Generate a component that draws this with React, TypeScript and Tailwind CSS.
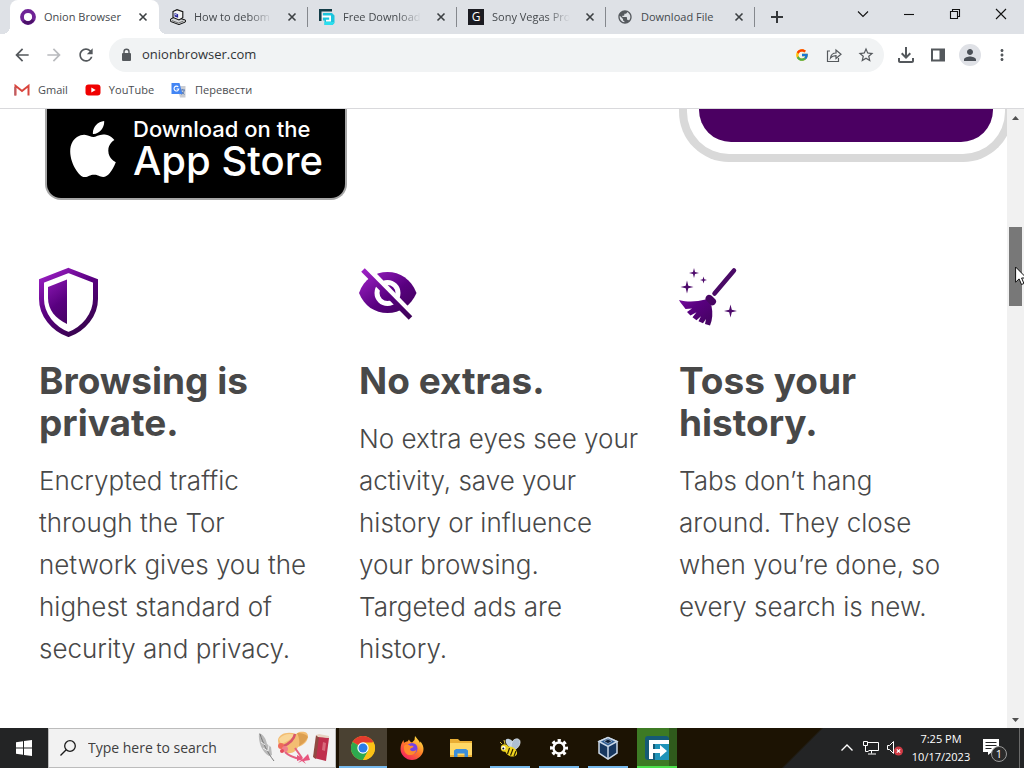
import type { ReactNode } from "react";
import { FcGoogle } from "react-icons/fc";
import { SiApple } from "react-icons/si";
import {
    MdArrowBack,
    MdArrowForward,
    MdMoreVert,
    MdOutlineFileDownload,
    MdPerson,
    MdPublic,
    MdRefresh,
    MdStarBorder,
} from "react-icons/md";

const CloseGlyph = () => (
    <svg className="size-4" viewBox="0 0 16 16" stroke="#3c4043" strokeWidth="1.6">
        <path d="M4.5 4.5l7 7M11.5 4.5l-7 7" />
    </svg>
);

const OnionIcon = () => (
    <svg className="size-4 shrink-0" viewBox="0 0 16 16">
        <circle cx="8" cy="8" r="6" fill="#fff" stroke="#6f2396" strokeWidth="3.8" />
        <path d="M3.6 12A6 6 0 0 0 13 11" fill="none" stroke="#4a1168" strokeWidth="3.2" />
    </svg>
);

const ComputerIcon = () => (
    <svg className="size-4 shrink-0" viewBox="0 0 16 16">
        <path d="M.6 10L5 8l10.400 3v2L9 15.600.6 12.500z" fill="#d4d6d8" stroke="#111" />
        <path d="M3 2.500L7 .7l5.800 2v6L9 11 3 8.500z" fill="#f2f2f2" stroke="#111" strokeWidth="1.100" />
        <path d="M4.500 3.900l3.600 1.400v3.500L4.500 7.500z" fill="#24249c" />
        <path d="M5.200 5l1.500.6v1l-1.500-.6z" fill="#fff" />
        <path d="M2 11.600l6.500 2.400 5-2" fill="none" stroke="#555" strokeWidth="0.800" />
    </svg>
);

const FreeDownloadIcon = () => (
    <svg className="size-4 shrink-0" viewBox="0 0 16 16">
        <path d="M0 0h13v2.500H2.500V12H0z" fill="#123c47" />
        <path d="M4 4h9l2.500 2.500V14l-2 2H5.500v-4.500H4z" fill="#1cc4dc" />
        <path d="M3 6.500h9v6H7v-1.800h3.200V8.400H3z" fill="#fff" />
        <path d="M5.500 13H15v1l-1.500 2h-8z" fill="#2adfee" />
    </svg>
);

const GIcon = () => (
    <span className="flex size-4 shrink-0 items-center justify-center bg-[#1b1b21] text-xs text-white">G</span>
);

const tabs: { title: string; icon: ReactNode; active?: boolean; faded?: boolean }[] = [
    { title: "Onion Browser", icon: <OnionIcon />, active: true },
    { title: "How to debom", icon: <ComputerIcon />, faded: true },
    { title: "Free Download", icon: <FreeDownloadIcon />, faded: true },
    { title: "Sony Vegas Pro", icon: <GIcon />, faded: true },
    { title: "Download File", icon: <MdPublic className="size-4 shrink-0 text-[#55595e]" /> },
];

const TabStrip = () => (
    <header className="flex h-[34px] shrink-0 bg-[#dee1e6] pl-2.5">
        <div className="flex min-w-0 flex-1">
            {tabs.map((tab) => (
                <div
                    key={tab.title}
                    className={
                        tab.active
                            ? "relative flex w-[149px] min-w-0 items-center rounded-t-lg bg-white pr-2 pl-2.5 before:absolute before:bottom-0 before:-left-2 before:size-2 before:bg-[radial-gradient(circle_at_0_0,transparent_8px,white_8px)] after:absolute after:-right-2 after:bottom-0 after:size-2 after:bg-[radial-gradient(circle_at_100%_0,transparent_8px,white_8px)]"
                            : "relative flex w-[149px] min-w-0 items-center pr-2 pl-[11px] after:absolute after:right-0 after:h-5 after:w-px after:bg-[#85888d]"
                    }
                >
                    {tab.icon}
                    <a
                        href="#"
                        className={
                            tab.faded
                                ? "ml-2 min-w-0 flex-1 whitespace-nowrap text-[11px] text-[#45494d] [mask-image:linear-gradient(90deg,#000_70%,transparent)]"
                                : "ml-2 min-w-0 flex-1 whitespace-nowrap text-[11px] text-[#45494d]"
                        }
                    >
                        {tab.title}
                    </a>
                    <button aria-label="Close tab" className="ml-3">
                        <CloseGlyph />
                    </button>
                </div>
            ))}
            <button aria-label="New tab" className="ml-3.5">
                <svg className="size-4" viewBox="0 0 16 16" stroke="#34373a" strokeWidth="2">
                    <path d="M8 2v12M2 8h12" />
                </svg>
            </button>
        </div>
        <div className="flex h-7 shrink-0">
            <WindowButton label="Search tabs">
                <path d="M3 5.5l5 5 5-5" />
            </WindowButton>
            <WindowButton label="Minimize">
                <path d="M3 8.5h10" />
            </WindowButton>
            <WindowButton label="Restore">
                <path d="M3.5 5.5h7v7h-7zM5.5 5.5v-2h7v7h-2" />
            </WindowButton>
            <WindowButton label="Close">
                <path d="M3 3l10 10M13 3L3 13" />
            </WindowButton>
        </div>
    </header>
);

const WindowButton = ({ label, children }: { label: string; children: ReactNode }) => (
    <button aria-label={label} className="flex w-[46px] items-center justify-center">
        <svg className="size-4" viewBox="0 0 16 16" fill="none" stroke="#111" strokeWidth="1.1">
            {children}
        </svg>
    </button>
);

const ToolButton = ({ label, children }: { label: string; children: ReactNode }) => (
    <button aria-label={label} className="flex h-8 w-8 shrink-0 items-center justify-center text-[#54585c]">
        {children}
    </button>
);

const Toolbar = () => (
    <div className="flex h-[42px] shrink-0 items-center bg-white px-1.5">
        <ToolButton label="Back"><MdArrowBack className="size-5" /></ToolButton>
        <ToolButton label="Forward"><MdArrowForward className="size-5 text-[#b9bbbe]" /></ToolButton>
        <ToolButton label="Reload"><MdRefresh className="size-5" /></ToolButton>
        <div className="mr-1.5 ml-[7px] flex h-[34px] min-w-0 flex-1 items-center rounded-full bg-[#f1f3f4] pr-0.5 pl-[9px]">
            <svg className="size-4 shrink-0" viewBox="0 0 16 16">
                <rect x="4" y="6" width="9" height="8" rx="1" fill="#54585c" />
                <path d="M6 6.500V4.700a2.500 2.500 0 0 1 5 0v1.800" fill="none" stroke="#54585c" strokeWidth="1.400" />
            </svg>
            <input
                aria-label="Address"
                defaultValue="onionbrowser.com"
                className="ml-2 min-w-0 flex-1 bg-transparent text-[13px] text-[#303336] outline-none"
            />
            <ToolButton label="Search with Google"><FcGoogle className="size-3.5" /></ToolButton>
            <ToolButton label="Share">
                <svg className="size-4" viewBox="0 0 16 16" fill="none" stroke="currentColor" strokeWidth="1.2">
                    <path d="M4 4H1.500v10.500h11V11M4.500 11C5 7.600 7 6 10 6V3l5 4.300-5 4.200V8.700c-2.500 0-4.200.6-5.500 2.300z" />
                </svg>
            </ToolButton>
            <ToolButton label="Bookmark"><MdStarBorder className="size-[18px]" /></ToolButton>
        </div>
        <ToolButton label="Downloads"><MdOutlineFileDownload className="size-6" /></ToolButton>
        <ToolButton label="Side panel">
            <svg className="size-4" viewBox="0 0 16 16">
                <path d="M2 2.500h12v11H2z" fill="none" stroke="currentColor" strokeWidth="2" />
                <path d="M9.500 2.500H14v11H9.500z" fill="currentColor" />
            </svg>
        </ToolButton>
        <ToolButton label="Profile">
            <span className="flex size-[22px] items-center justify-center rounded-full bg-[#dfe1e6]">
                <MdPerson className="size-[18px] text-[#4b5057]" />
            </span>
        </ToolButton>
        <ToolButton label="Menu"><MdMoreVert className="size-[18px]" /></ToolButton>
    </div>
);

const Bookmarks = () => (
    <nav className="flex h-8 shrink-0 items-center gap-[17px] bg-white pb-1 pl-[14px] text-[11px] text-[#4a4d51]">
        <a href="#" className="flex items-center gap-2">
            <svg className="size-4" viewBox="0 0 16 16" fill="none">
                <path d="M1.500 13.500V3.800L8 9l6.500-5.200v9.700" stroke="#d9453d" strokeWidth="2" />
                <path d="M1 13.500V5" stroke="#b8646c" strokeWidth="1.500" />
            </svg>
            Gmail
        </a>
        <a href="#" className="flex items-center gap-2">
            <svg className="size-4" viewBox="0 0 16 16">
                <rect x="0.500" y="2.500" width="15" height="11" rx="3" fill="#f00000" />
                <path d="M6.300 5.500v5L10.700 8z" fill="#fff" />
            </svg>
            YouTube
        </a>
        <a href="#" className="flex items-center gap-2">
            <svg className="size-4" viewBox="0 0 16 16">
                <path d="M6 4h8.500v11.500H9z" fill="#c9ccd2" />
                <path d="M.5 1h8l3 11H.5z" fill="#4285f4" />
                <path d="M7.300 5A2.400 2.400 0 1 0 7.800 7H5.500" fill="none" stroke="#fff" strokeWidth="1.100" />
                <path d="M9.500 8h4.500M11.700 7v1M10.500 12.500c2-1.500 2.500-3 2.700-4.500M10.800 9.800l2.500 2.700" stroke="#5e7fb5" fill="none" />
            </svg>
            Перевести
        </a>
    </nav>
);

const PurpleGradient = ({ id }: { id: string }) => (
    <linearGradient id={id} x1="5" y1="5" x2="45" y2="60" gradientUnits="userSpaceOnUse">
        <stop offset="0" stopColor="#9a1fc2" />
        <stop offset="0.5" stopColor="#590080" />
        <stop offset="1" stopColor="#3a0352" />
    </linearGradient>
);

const ShieldIcon = () => (
    <svg className="h-[70px] w-[60px]" viewBox="0 0 60 70">
        <PurpleGradient id="shield" />
        <path
            d="M29.500 3.500L56.500 14v18c0 16-12 30-27 35.500C14.500 62 2.500 48 2.500 32V14z"
            fill="none"
            stroke="url(#shield)"
            strokeWidth="5"
        />
        <path d="M28 12.500V57C16.500 51.500 9 43 9 31V20z" fill="url(#shield)" />
    </svg>
);

const EyeIcon = () => (
    <svg className="h-[70px] w-[60px]" viewBox="0 0 60 70">
        <PurpleGradient id="eye" />
        <path d="M0 26C5 12 16 5 28.500 5S52 12 57.500 26C52 39 41 46 28.500 46S5 39 0 26z" fill="url(#eye)" />
        <circle cx="28.500" cy="26" r="10.500" fill="none" stroke="#fff" strokeWidth="5" />
        <path d="M6.500 0l48 50" stroke="#fff" strokeWidth="7" />
        <path d="M4 3l47.500 48" stroke="url(#eye)" strokeWidth="5" />
    </svg>
);

const BroomIcon = () => (
    <svg className="h-[70px] w-[60px]" viewBox="0 0 60 70">
        <PurpleGradient id="broom" />
        <path d="M55 3.500L35.500 26.500" stroke="#4a0a66" strokeWidth="4.500" strokeLinecap="round" />
        <path d="M28 28.500c2-1.500 4-.5 6 1.500s4 3.500 3 5.500-2.500 3.500-5 3-5-3.500-5.500-5 .2-4 1.500-5z" fill="#480563" />
        <path
            d="M0 33c10 2.500 18 1.500 26.500-.5l6 6.500c1.500 7 1 14-1.500 19.500l-5-1.500 1-5-3 4.300-4.500-2 2.500-5-4.500 4-4-3 4-5-6 3.200-3.500-3.500 5-3.500-6.500.5C4 38.500 1.500 36 0 33z"
            fill="url(#broom)"
        />
        <g fill="#4d0a6b">
            <path d="M15 1l1 4 4 1-4 1-1 4-1-4-4-1 4-1z" />
            <path d="M24.500 9.500l.8 2.700 2.700.8-2.700.8-.8 2.700-.8-2.700-2.700-.8 2.700-.8z" />
            <path d="M8 13.500l1.300 5.200 5.200 1.300-5.200 1.300L8 26.500l-1.300-5.200L1.500 20l5.200-1.300z" />
            <path d="M51.500 37.500l1.300 5.200L58 44l-5.200 1.300-1.300 5.200-1.300-5.200L45 44l5.200-1.300z" />
        </g>
    </svg>
);

const features = [
    {
        icon: <ShieldIcon />,
        title: "Browsing is private.",
        text: "Encrypted traffic through the Tor network gives you the highest standard of security and privacy.",
    },
    {
        icon: <EyeIcon />,
        title: "No extras.",
        text: "No extra eyes see your activity, save your history or influence your browsing. Targeted ads are history.",
    },
    {
        icon: <BroomIcon />,
        title: "Toss your history.",
        text: "Tabs don’t hang around. They close when you’re done, so every search is new.",
    },
];

const SitePage = () => (
    <main className="min-w-0 flex-1 overflow-hidden bg-white pr-2 pl-[39px] font-[Inter,sans-serif]">
        <div className="grid grid-cols-3 items-start">
            <a
                href="#"
                className="ml-1.5 flex h-[91px] w-[302px] gap-3 rounded-b-[16px] border-2 border-t-0 border-[#a6a6a6] bg-black pl-[18px] text-white"
            >
                <SiApple className="mt-3 size-14 shrink-0" />
                <span className="pt-2 whitespace-nowrap">
                    <span className="block text-[22px] leading-6 font-medium">Download on the</span>
                    <span className="block text-[40px] leading-10 font-medium">App Store</span>
                </span>
            </a>
            <div className="col-start-3 h-[53px] w-[334px] rounded-b-[50px] border-8 border-t-0 border-[#d9d9d9] px-3 pb-3">
                <div className="h-full rounded-b-[32px] bg-[#4b0062]" />
            </div>
        </div>
        <div className="mt-[67px] grid grid-cols-3">
            {features.map((feature) => (
                <section key={feature.title} className="pr-8">
                    {feature.icon}
                    <h2 className="mt-[23px] text-[37px] leading-[42px] font-bold text-[#484848]">{feature.title}</h2>
                    <p className="mt-4 text-[26px] leading-[42px] font-light text-[#484848]">{feature.text}</p>
                </section>
            ))}
        </div>
    </main>
);

const Scrollbar = () => (
    <div className="relative flex w-[17px] shrink-0 flex-col items-center bg-[#f1f1f1]">
        <button aria-label="Scroll up" className="flex h-[17px] items-center">
            <svg className="h-1 w-[7px]" viewBox="0 0 7 4"><path d="M0 4l3.500-4L7 4z" fill="#505050" /></svg>
        </button>
        <div className="grow-[101]" />
        <div className="relative w-[13px] grow-[79] bg-[#787878]">
            <svg className="absolute top-[39px] left-1.5 h-5 w-3" viewBox="0 0 12 20">
                <path d="M.6 1v15.200l3.500-3.300 2.400 5.600 2.400-1-2.300-5.500H11.500z" fill="#fff" stroke="#111" />
            </svg>
        </div>
        <div className="grow-[405]" />
        <button aria-label="Scroll down" className="flex h-[17px] items-center">
            <svg className="h-1 w-[7px]" viewBox="0 0 7 4"><path d="M0 0l3.500 4L7 0z" fill="#505050" /></svg>
        </button>
    </div>
);

const ChromeIcon = () => (
    <svg className="size-6" viewBox="0 0 24 24">
        <circle cx="12" cy="12" r="12" fill="#fbc116" />
        <path d="M12 12L1.600 6A12 12 0 0 1 22.400 6z" fill="#e33b2e" />
        <path d="M1.600 6A12 12 0 0 0 12 24l5.200-9L12 12z" fill="#2da94f" />
        <path d="M12 6.500h10.700A12 12 0 0 1 12 24l5-9z" fill="#fbc116" />
        <circle cx="12" cy="12" r="5.700" fill="#fff" />
        <circle cx="12" cy="12" r="4.500" fill="#2b7de9" />
    </svg>
);

const FirefoxIcon = () => (
    <svg className="size-6" viewBox="0 0 24 24">
        <linearGradient id="fox" x1="20" y1="2" x2="5" y2="22" gradientUnits="userSpaceOnUse">
            <stop offset="0" stopColor="#ffe042" />
            <stop offset="0.5" stopColor="#ff7b28" />
            <stop offset="1" stopColor="#f5245e" />
        </linearGradient>
        <path
            d="M15 0c2 2 2.500 3.500 4 5l1 2 .5-1.500c2 2.500 3 5 3 7.500C23.500 19 18 24 12 24S.5 19 .5 13C.5 9.500 1.500 7 3.500 4l.5 3C5 6 6 5.500 7.500 5.500L9 3.500c.5 1.500 1.500 2.500 3 3L14.500 4z"
            fill="url(#fox)"
        />
        <circle cx="12" cy="12.500" r="5.500" fill="#7542e5" />
        <path d="M4 10c2-2 5-1 6.500 0 1.500-.5 3 0 3 1-1 1-3 1-3.500 2.500 1 2.500 5 2 6.500 0-.5 4-4 6-7.500 5.500S3.500 15 4 10z" fill="#ff8a2c" />
    </svg>
);

const FolderIcon = () => (
    <svg className="size-6" viewBox="0 0 24 24">
        <path d="M1 3h8l2 2h12v16H1z" fill="#e9ae35" />
        <path d="M1 7h22v12H1z" fill="#ffd866" />
        <path d="M5 21v-6.500L7 13h10l2 1.500V21h-3.500v-3.500h-7V21z" fill="#3c8edb" />
    </svg>
);

const BeeIcon = () => (
    <svg className="size-6" viewBox="0 0 24 24">
        <path d="M11 11C6 6 7 2 11 3s5 4 4 8z" fill="#c3d3e2" />
        <path d="M13 11c0-5 3-9 7-8s2 9-4 11z" fill="#aebfd2" stroke="#e2e9f0" strokeWidth="0.700" />
        <ellipse cx="13" cy="15.500" rx="6.500" ry="4.500" transform="rotate(30 13 15.500)" fill="#f2d51e" />
        <path d="M11.500 12l-2 6M15 13l-2.500 6.500M18 15l-2 5" stroke="#2c2305" strokeWidth="1.200" />
        <circle cx="6.500" cy="12" r="3.700" fill="#ecd224" />
        <circle cx="5.500" cy="12" r="2.100" fill="#fff" />
        <circle cx="5.300" cy="12.500" r="1" fill="#111" />
        <path d="M4 8L2 6M7 8L6 4" stroke="#d9c33b" />
    </svg>
);

const GearIcon = () => (
    <svg className="size-5" viewBox="0 0 20 20" fill="none" stroke="#fff">
        <circle cx="10" cy="10" r="5.500" strokeWidth="2.400" />
        <circle cx="10" cy="10" r="7.500" strokeWidth="3" strokeDasharray="3.200 2.690" strokeDashoffset="1.600" />
    </svg>
);

const BoxIcon = () => (
    <svg className="size-6" viewBox="0 0 24 24" stroke="#cbd9e8" strokeWidth="1.500">
        <path d="M3 5.500l9-4 9 4V17l-9 6-9-6z" fill="#17375f" />
        <path d="M3 5.500l9 5 9-5-9-4z" fill="#2f5d93" />
        <path d="M12 10.500V23" />
        <path d="M8 5.300l4-2 4 2-4 2.200z" fill="#0c1e38" strokeWidth="0.500" />
    </svg>
);

const FdmIcon = () => (
    <svg className="size-6" viewBox="0 0 24 24">
        <rect x="0" y="0" width="24" height="24" rx="3" fill="#155a76" />
        <path d="M10 8h14v16H10z" fill="#1f93b8" />
        <path d="M4 4h20v4H8v5h7V9l7 6-7 6v-4H8v6H4z" fill="#fff" />
    </svg>
);

const apps = [
    { name: "Chrome", icon: <ChromeIcon />, style: "w-12 bg-[#4a4132] border-[#76b9ed]" },
    { name: "Firefox", icon: <FirefoxIcon />, style: "w-12 border-transparent" },
    { name: "File Explorer", icon: <FolderIcon />, style: "w-12 border-transparent" },
    { name: "Bee", icon: <BeeIcon />, style: "mx-1 w-10 border-[#76b9ed]" },
    { name: "Settings", icon: <GearIcon />, style: "mx-1 w-10 border-[#76b9ed]" },
    { name: "VirtualBox", icon: <BoxIcon />, style: "mx-1 w-10 border-[#76b9ed]" },
    {
        name: "Free Download Manager",
        icon: <FdmIcon />,
        style: "mx-1 w-10 border-[#4be04b] bg-[linear-gradient(90deg,#3d7a24_32px,#2f5a1c_32px)]",
    },
];

const SearchArt = () => (
    <svg className="mr-1 h-9 w-[74px] shrink-0" viewBox="0 0 74 36">
        {/* feather */}
        <path d="M2 3c5 2 7 6 8 11l4 3 1 8-3 1C5 22 1 12 2 3z" fill="#b9b9b9" />
        <path d="M3 4c3 9 7 18 14 27" stroke="#777" fill="none" />
        <path d="M4 12l4 3M6 18l5 3M12 15l-1 6" stroke="#eee" />
        {/* bonnet */}
        <path d="M21 10c1-6 9-9 18-6l3-2c5-1 9 0 9 4 0 5-4 9-10 11-2 5-8 8-13 5-4-2-7-7-7-12z" fill="#f3bd72" />
        <path d="M22 9c4-5 11-6 16-4-4 4-8 7-14 9z" fill="#f9d698" />
        <path d="M40 3c5 0 9 1 11 4-2 4-5 7-9 9 1-5 0-9-2-13z" fill="#dc9f50" />
        <path d="M38 4c-1 6-6 10-13 13" stroke="#d9566a" strokeWidth="2.500" fill="none" />
        <path d="M28 22c4 4 9 6 16 7M38 18l7 10" stroke="#e4607f" strokeWidth="2" fill="none" />
        <circle cx="24" cy="16" r="3" fill="#ee6a5a" />
        <circle cx="28" cy="19" r="3" fill="#f0808c" />
        <circle cx="25" cy="21" r="2" fill="#e4485a" />
        <path d="M46 28l-6-3v6l6-2 5-5 2 6-6 1 2 3-4-3-4 2z" fill="#e8557e" />
        {/* book */}
        <path d="M60 6l12 2-3 23-12-3z" fill="#bf2f4c" />
        <path d="M59 5l3 2-3 22-3-2z" fill="#8f4a42" />
        <path d="M59 5l3-1 10 2v2l-11-1z" fill="#e6d3c2" />
        <path d="M66 12l3 1-1 8-3-1z" fill="#d86a7c" />
    </svg>
);

const Taskbar = () => (
    <footer className="flex h-10 shrink-0 bg-[#232425] text-white">
        <button aria-label="Start" className="flex w-12 shrink-0 items-center justify-center">
            <svg className="size-4" viewBox="0 0 16 16" fill="#fff">
                <path d="M0 2.200L7 1.200v6.300H0zM8 1l8-1v7.500H8zM0 8.500h7v6.300l-7-1zM8 8.500h8V16l-8-1z" />
            </svg>
        </button>
        <div className="flex w-72 min-w-0 items-center border border-[#bcbcbc] bg-[#f2f2f2] pl-[11px]">
            <svg className="size-4 shrink-0" viewBox="0 0 16 16" fill="none" stroke="#1c1c1c" strokeWidth="1.300">
                <circle cx="10" cy="6" r="5.300" />
                <path d="M6.200 9.800L.5 15.500" />
            </svg>
            <input
                aria-label="Search"
                placeholder="Type here to search"
                className="ml-3 min-w-0 flex-1 bg-transparent text-sm outline-none placeholder:text-[#404040]"
            />
            <SearchArt />
        </div>
        <div className="flex min-w-0 flex-1 gap-px bg-[linear-gradient(135deg,#1c1303_calc(100%-36px),#232425_calc(100%-34px))] pl-[3px]">
            {apps.map((app) => (
                <button
                    key={app.name}
                    aria-label={app.name}
                    className={`flex shrink-0 items-center justify-center border-b-2 pt-0.5 ${app.style}`}
                >
                    {app.icon}
                </button>
            ))}
        </div>
        <div className="flex shrink-0 items-center pl-[7px]">
            <button aria-label="Show hidden icons" className="mr-2">
                <svg className="size-4" viewBox="0 0 16 16" fill="none" stroke="#fff" strokeWidth="1.400">
                    <path d="M2.500 10.500L8 5l5.500 5.500" />
                </svg>
            </button>
            <button aria-label="Network" className="mr-2">
                <svg className="size-4" viewBox="0 0 16 16" fill="none" stroke="#fff">
                    <path d="M4.500 2.500h11v8h-10M8.500 10.500v3M5 14h8M.5 1.500h4v4h-4zM2.500 5.500v6h3" />
                </svg>
            </button>
            <button aria-label="Volume">
                <svg className="size-4" viewBox="0 0 16 16" fill="none">
                    <path d="M.5 5.500h2l4-4v12l-4-4h-2z" stroke="#fff" />
                    <circle cx="11.500" cy="11" r="4.500" fill="#d13b45" />
                    <path d="M9.800 9.300l3.400 3.400M13.200 9.300l-3.400 3.400" stroke="#fff" strokeWidth="1.200" />
                </svg>
            </button>
            <div className="mr-1 w-[76px] text-center text-[11px] leading-[18px]">
                <p>7:25 PM</p>
                <p>10/17/2023</p>
            </div>
            <button aria-label="Notifications" className="relative mr-3 size-6">
                <svg className="size-6" viewBox="0 0 24 24">
                    <path d="M0 3h16v13H9l-4 3v-3H0z" fill="#fff" />
                    <path d="M2.500 6.500h11M2.500 9.500h11M2.500 12.500h6" stroke="#232425" />
                </svg>
                <span className="absolute top-2.5 left-2 flex size-4 items-center justify-center rounded-full border border-[#9a9a9a] bg-[#2b2b2b] text-[11px]">
                    1
                </span>
            </button>
            <div className="mr-1 h-full w-px bg-[#6a6a6a]" />
        </div>
    </footer>
);

const App = () => {
    return (
        <div className="flex h-screen flex-col overflow-hidden bg-white font-['Open_Sans',sans-serif]">
            <TabStrip />
            <Toolbar />
            <Bookmarks />
            <div className="flex min-h-0 flex-1 border-t border-[#d9d9dc]">
                <SitePage />
                <Scrollbar />
            </div>
            <Taskbar />
        </div>
    );
};

export default App;
